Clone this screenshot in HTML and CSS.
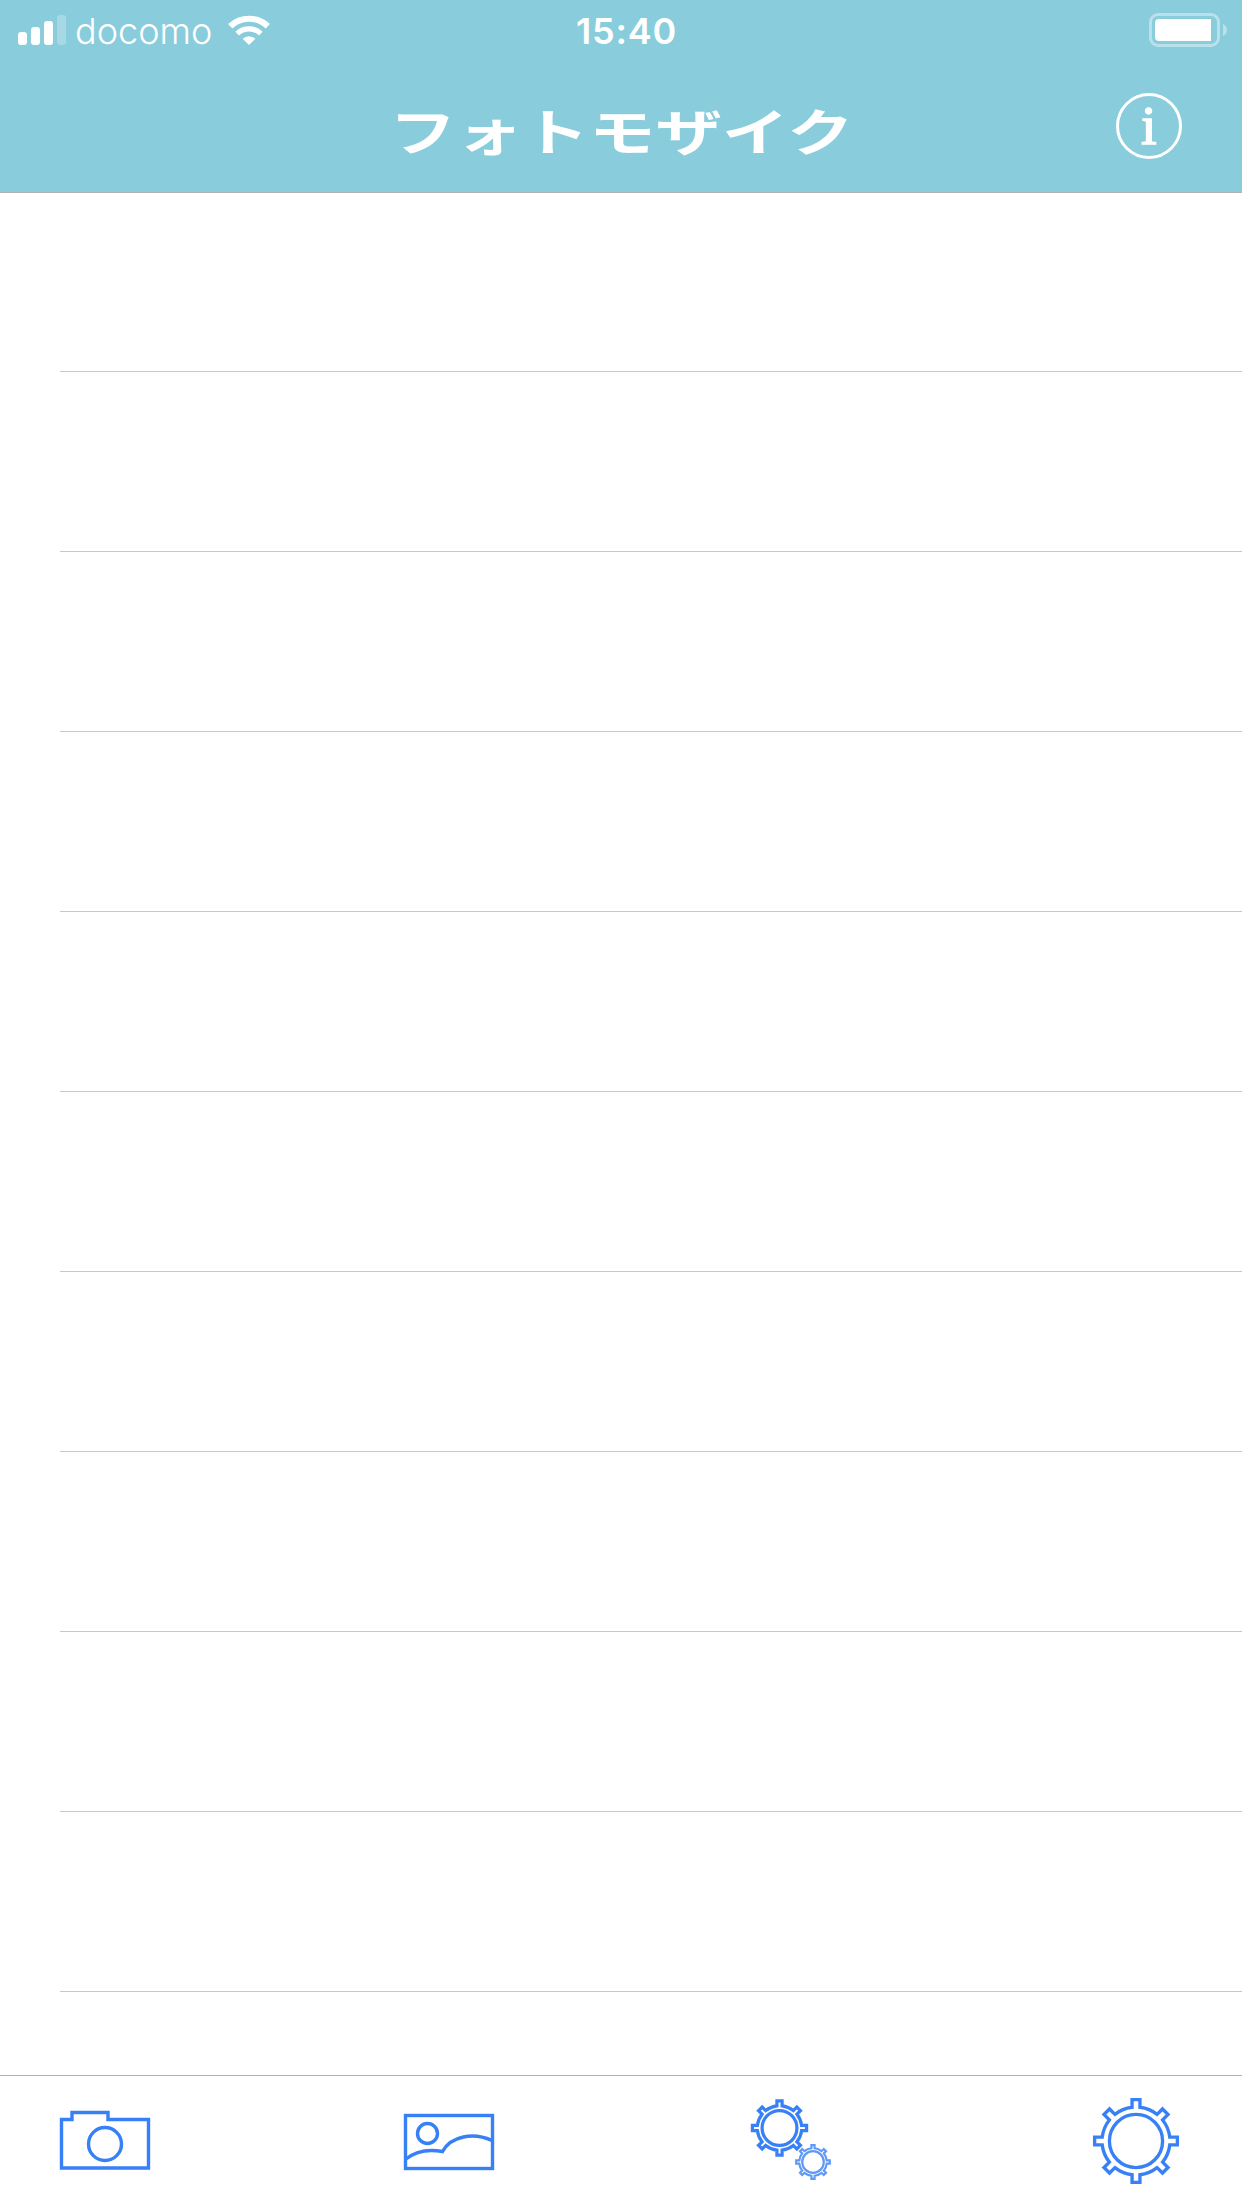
FILE: index.html
```
<!DOCTYPE html>
<html lang="ja">
<head>
<meta charset="utf-8">
<title>フォトモザイク</title>
<link rel="stylesheet" href="styles.css">
</head>
<body>
<div class="screen">

  <header class="header">
    <div class="status">
      <div class="carrier">
        <svg class="signal" width="48" height="30" viewBox="0 0 48 30" fill="#fff">
          <rect x="0" y="17" width="9" height="13" rx="3"/>
          <rect x="13" y="12" width="9" height="18" rx="3"/>
          <rect x="26" y="6" width="9" height="24" rx="3"/>
          <rect x="39" y="0" width="9" height="30" rx="3" opacity=".25"/>
        </svg>
        <span class="carrier-name">docomo</span>
        <svg class="wifi" width="42" height="30" viewBox="0 0 42 30">
          <path d="M2.2 11.2A27.5 27.5 0 0 1 39.8 11.2" fill="none" stroke="#fff" stroke-width="6.2"/>
          <path d="M9.2 18.6A17 17 0 0 1 32.8 18.6" fill="none" stroke="#fff" stroke-width="5.2"/>
          <path d="M21 30L14.6 23.8A9.3 9.3 0 0 1 27.4 23.8Z" fill="#fff"/>
        </svg>
      </div>
      <span class="time">15:40</span>
      <svg class="battery" width="78" height="34" viewBox="0 0 78 34">
        <rect x="1.5" y="1.5" width="68" height="31" rx="7.5" fill="none" stroke="#fff" stroke-width="3" opacity=".4"/>
        <path d="M10 6H62V28H10A4 4 0 0 1 6 24V10A4 4 0 0 1 10 6Z" fill="#fff"/>
        <path d="M74 11C79.3 13 79.3 21 74 23Z" fill="#fff" opacity=".4"/>
      </svg>
    </div>
    <div class="navbar">
      <h1 class="title">フォトモザイク</h1>
      <svg class="info" width="66" height="66" viewBox="0 0 66 66">
        <circle cx="33" cy="33" r="31.5" fill="none" stroke="#fff" stroke-width="3"/>
        <text class="info-mark" x="33" y="51" text-anchor="middle">i</text>
      </svg>
    </div>
  </header>

  <ul class="list">
    <li class="row"></li>
    <li class="row"></li>
    <li class="row"></li>
    <li class="row"></li>
    <li class="row"></li>
    <li class="row"></li>
    <li class="row"></li>
    <li class="row"></li>
    <li class="row"></li>
    <li class="row"></li>
  </ul>

  <nav class="toolbar">
    <!-- camera -->
    <svg class="icon" width="90" height="90" viewBox="0 0 90 90">
      <path d="M1.5 23.5H12V16.5H48V23.5H88.5V72H1.5Z"/>
      <circle cx="45" cy="48" r="16.5"/>
    </svg>
    <!-- album -->
    <svg class="icon" width="93" height="90" viewBox="0 0 93 90">
      <rect x="1.5" y="19.5" width="87" height="53"/>
      <circle cx="23.5" cy="37.5" r="10"/>
      <path d="M2 63C12 55 25 53 38.5 55.5C47 40 69 36 88 44.5"/>
    </svg>
    <!-- mosaic -->
    <svg class="icon" width="87" height="90" viewBox="0 0 87 90">
      <g transform="translate(28.5 32) scale(.645)" stroke-width="5">
        <path id="gear" d="M-4 -34.27V-42H4V-34.27A34.5 34.5 0 0 1 21.4 -27.06L26.87 -32.53L32.53 -26.87L27.06 -21.4A34.5 34.5 0 0 1 34.27 -4H42V4H34.27A34.5 34.5 0 0 1 27.06 21.4L32.53 26.87L26.87 32.53L21.4 27.06A34.5 34.5 0 0 1 4 34.27V42H-4V34.27A34.5 34.5 0 0 1 -21.4 27.06L-26.87 32.53L-32.53 26.87L-27.06 21.4A34.5 34.5 0 0 1 -34.27 4H-42V-4H-34.27A34.5 34.5 0 0 1 -27.06 -21.4L-32.53 -26.87L-26.87 -32.53L-21.4 -27.06A34.5 34.5 0 0 1 -4 -34.27Z"/>
        <circle r="27"/>
      </g>
      <g transform="translate(62 66) scale(.4)" stroke-width="5.4" opacity=".8">
        <use href="#gear"/>
        <circle r="27"/>
      </g>
    </svg>
    <!-- settings -->
    <svg class="icon" width="88" height="90" viewBox="0 0 88 90">
      <g transform="translate(44 45) scale(.985)">
        <use href="#gear"/>
        <circle r="27"/>
      </g>
    </svg>
  </nav>

</div>
</body>
</html>
```
FILE: styles.css
```
* { box-sizing: border-box; }

body {
  margin: 0;
  background: #fff;
  font-family: Inter, "Noto Sans CJK JP", sans-serif;
}

svg { display: block; }

.screen {
  display: flex;
  flex-direction: column;
  width: 1242px;
  height: 2208px;
  overflow: hidden;
}

/* header */
.header {
  height: 193px;
  background: #89cddc;
  border-bottom: 1px solid #b2b2b2;
  color: #fff;
}

.status {
  display: grid;
  grid-template-columns: 1fr auto 1fr;
  align-items: center;
  height: 60px;
  padding: 0 15px 0 18px;
}

.carrier {
  display: flex;
  align-items: center;
}

.carrier-name {
  margin-left: 9px;
  padding-top: 2px;
  width: 153px;
  font-size: 36px;
  font-weight: 350;
  line-height: 58px;
  letter-spacing: 0;
}

.time {
  padding: 2px 0 0 8px;
  font-size: 36px;
  font-weight: 600;
  line-height: 58px;
  letter-spacing: .8px;
}

.battery { justify-self: end; }

.navbar {
  display: grid;
  grid-template-columns: 1fr auto 1fr;
  align-items: center;
  height: 132px;
  padding: 0 60px;
}

.title {
  grid-column: 2;
  margin: 0;
  padding-top: 6px;
  font-family: "Noto Sans CJK JP", sans-serif;
  font-size: 50px;
  font-weight: 700;
  line-height: 60px;
  transform: scaleX(1.33);
}

.info { justify-self: end; }

.info-mark {
  fill: #fff;
  stroke: #fff;
  stroke-width: 1.6px;
  font-family: "Liberation Serif", serif;
  font-size: 55px;
}

/* empty list */
.list {
  flex: 1;
  margin: -1px 0 0;
  padding: 0 0 0 60px;
  list-style: none;
}

.row {
  height: 180px;
  border-bottom: 1px solid #c8c7cc;
}

/* bottom toolbar */
.toolbar {
  display: flex;
  gap: 254px;
  height: 133px;
  padding: 20px 0 0 60px;
  border-top: 1px solid #b2b2b2;
}

.icon {
  flex: none;
  overflow: visible;
  fill: none;
  stroke: #3880f6;
  stroke-width: 3.4;
}
```
